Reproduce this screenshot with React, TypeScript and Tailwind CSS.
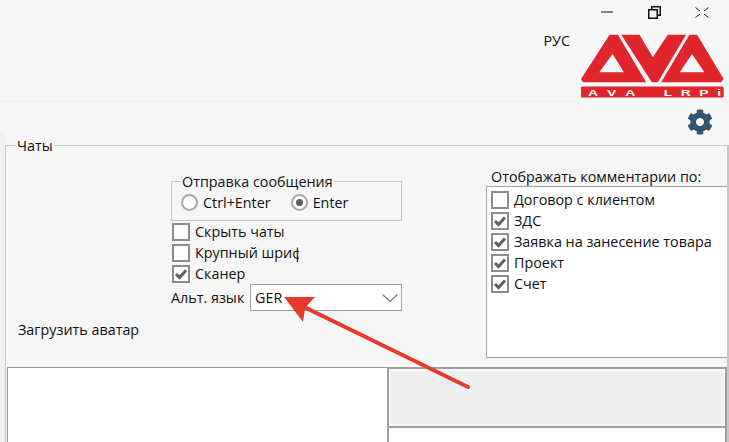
import { FaCog } from "react-icons/fa";

function CheckMark() {
  return (
    <svg viewBox="0 0 14 14" className="h-3.5 w-3.5">
      <path d="M2 7 L5.5 10.5 L12 3.5" fill="none" stroke="#5f5f5f" strokeWidth="3" />
    </svg>
  );
}

function CheckRow({ label, checked, className = "" }: { label: string; checked?: boolean; className?: string }) {
  return (
    <div className={`flex h-[21px] items-center ${className}`}>
      <span className="flex h-[18px] w-[18px] shrink-0 items-center justify-center border-2 border-[#8c8c8c] bg-white">
        {checked && <CheckMark />}
      </span>
      <span className="ml-[5px] whitespace-nowrap">{label}</span>
    </div>
  );
}

function Radio({ label, checked, className = "" }: { label: string; checked?: boolean; className?: string }) {
  return (
    <div className={`flex items-center ${className}`}>
      <span className="flex h-[17px] w-[17px] items-center justify-center rounded-full border-2 border-[#a8a8a8] bg-white">
        {checked && <span className="h-[7px] w-[7px] rounded-full bg-[#5a5a5a]" />}
      </span>
      <span className="ml-[5px]">{label}</span>
    </div>
  );
}

function Logo() {
  return (
    <svg viewBox="153 100 430 192" className="h-[64px] w-[143px] overflow-visible">
      <path
        fillRule="evenodd"
        fill="#e0252d"
        d="M239 102 L264 102 L349 245 L159 245 L153 235 Z M248 160 L208 215 L282 215 Z"
      />
      <path fill="#e0252d" d="M274 102 L329 102 L369 170 L414 102 L469 102 L384 245 L366 245 Z" />
      <path
        fillRule="evenodd"
        fill="#e0252d"
        d="M479 102 L502 102 L582 235 L574 245 L394 245 Z M487 160 L450 215 L524 215 Z"
      />
      <rect x="153" y="258" width="429" height="33" rx="4" fill="#e0252d" />
      <text
        transform="translate(174 285) scale(1.5 1)"
        fill="#fff"
        fontSize="28"
        fontWeight="700"
        letterSpacing="20"
        fontFamily="Liberation Sans, sans-serif"
      >
        AVA
      </text>
      <text
        transform="translate(402 285) scale(1.5 1)"
        fill="#fff"
        fontSize="28"
        fontWeight="700"
        letterSpacing="17"
        fontFamily="Liberation Sans, sans-serif"
      >
        LRPi
      </text>
    </svg>
  );
}

export default function App() {
  return (
    <div className="relative flex h-[442px] w-[729px] flex-col overflow-hidden bg-[#f7f7f7] font-['Open_Sans','Noto_Sans',sans-serif] text-[14.35px] leading-[19px] text-[#111]">
      {/* title bar */}
      <div className="flex h-[24px] shrink-0 items-center justify-end">
        <svg viewBox="0 0 12 2" className="mr-[35px] h-[2px] w-[12px]">
          <rect width="12" height="1" y="0.5" fill="#111" />
        </svg>
        <svg viewBox="0 0 13 13" className="mr-[34px] h-[13px] w-[13px]">
          <path d="M0.75 3.75h8.5v8.5h-8.5z M3.75 3.5V0.75h8.5v8.5H9.5" fill="none" stroke="#111" strokeWidth="1.5" />
        </svg>
        <svg viewBox="0 0 14 11" className="mr-[20px] h-[11px] w-[14px]">
          <path d="M0.5 0.5 L5 4 M13.5 0.5 L9 4 M0.5 10.5 L5 7 M13.5 10.5 L9 7" fill="none" stroke="#222" strokeWidth="1" />
        </svg>
      </div>

      {/* language + logo */}
      <div className="flex h-[78px] shrink-0 justify-end border-b border-[#f2f2f2] pr-[5px]">
        <span className="mr-[11px] mt-[7px]">РУС</span>
        <div className="mt-[10px]">
          <Logo />
        </div>
      </div>

      <div className="flex h-[31px] shrink-0 items-start justify-end pr-[16px] pt-[7px]">
        <FaCog className="h-[26px] w-[26px] text-[#2f5570]" />
      </div>

      {/* Чаты group */}
      <div className="min-h-0 flex-1 border-l-[5px] border-[#f0f0f0] pt-[3px]">
        <fieldset className="h-full border-l border-r-2 border-t border-[#c8c8c8] bg-[#f6f6f6] pl-px">
          <legend className="ml-[9px] px-px leading-[19px]">Чаты</legend>

          <div className="flex h-[204px]">
            <div className="w-[164px] pl-[11px]">
              <div className="mt-[165px]">Загрузить аватар</div>
            </div>

            <div className="w-[231px] pt-[17px]">
              <fieldset className="h-[49px] border border-[#c8c8c8] pl-[9px] pt-[2px]">
                <legend className="px-px leading-[19px]">Отправка сообщения</legend>
                <div className="flex">
                  <Radio label="Ctrl+Enter" />
                  <Radio label="Enter" checked className="ml-[20px]" />
                </div>
              </fieldset>
              <CheckRow label="Скрыть чаты" className="w-[128px] overflow-hidden pl-px" />
              <CheckRow label="Крупный шрифт" className="w-[128px] overflow-hidden pl-px" />
              <CheckRow label="Сканер" checked className="pl-px" />
              <div className="flex items-center">
                <span className="w-[79px]">Альт. язык</span>
                <div className="flex h-[27px] flex-1 items-center justify-between border border-[#a0a0a0] bg-white pl-[4px] pr-[3px]">
                  <span>GER</span>
                  <svg viewBox="0 0 16 8" className="h-[8px] w-[16px]">
                    <path d="M0.5 0.5 L8 7.5 L15.5 0.5" fill="none" stroke="#777" strokeWidth="1.2" />
                  </svg>
                </div>
              </div>
            </div>

            <div className="ml-[84px] w-[241px] pt-[12px]">
              <div className="pl-[5px]">Отображать комментарии по:</div>
              <div className="h-[172px] border border-r-0 border-[#a0a0a0] bg-white pl-[4px] pt-[2px]">
                <CheckRow label="Договор с клиентом" />
                <CheckRow label="ЗДС" checked />
                <CheckRow label="Заявка на занесение товара" checked />
                <CheckRow label="Проект" checked />
                <CheckRow label="Счет" checked />
              </div>
            </div>
          </div>

          {/* bottom panels */}
          <div className="mt-[8px] flex h-[80px]">
            <div className="w-[380px] border-l border-t border-[#999] bg-white" />
            <div className="flex w-[340px] flex-col border-2 border-b-0 border-[#a0a0a0]">
              <div className="h-[57px] border-2 border-[#f8f8f8] bg-[#efefef]" />
              <div className="flex-1 border-t-2 border-[#a0a0a0] bg-white" />
            </div>
          </div>
        </fieldset>
      </div>

      {/* annotation arrow */}
      <svg viewBox="0 0 729 442" className="pointer-events-none absolute left-0 top-0 h-[442px] w-[729px]">
        <line x1="468" y1="387" x2="300" y2="305" stroke="#e63a2e" strokeWidth="4" strokeLinecap="round" />
        <path d="M284 297 L315 297 L305 308 L303 322 Z" fill="#e63a2e" />
      </svg>
    </div>
  );
}
